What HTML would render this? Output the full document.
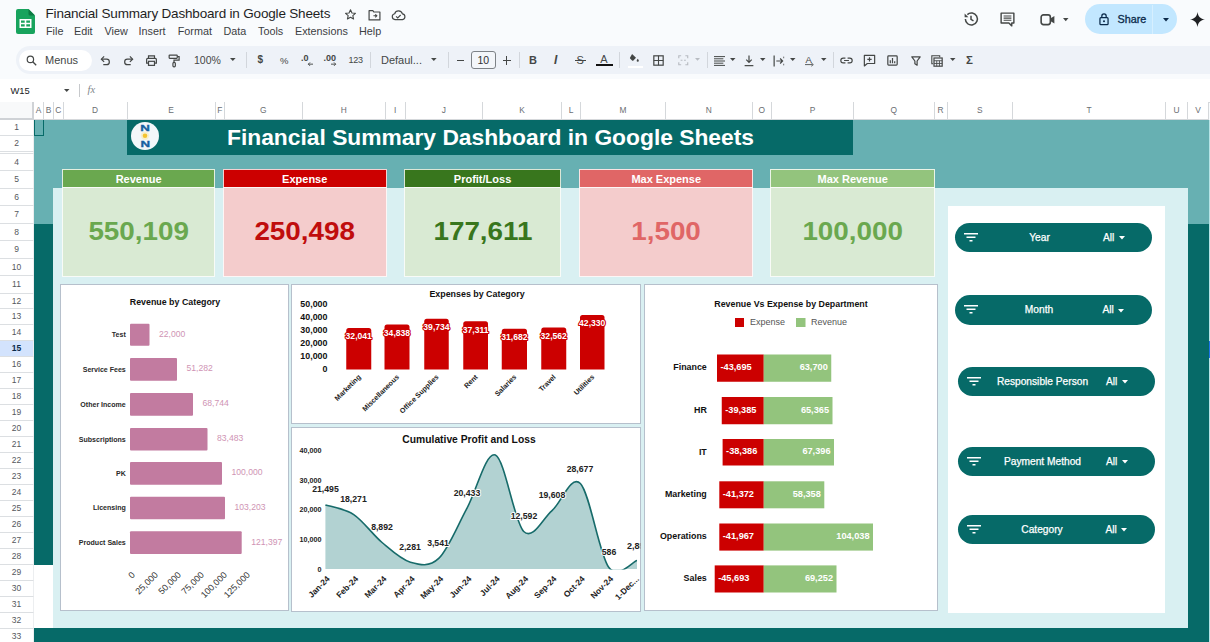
<!DOCTYPE html>
<html lang="en"><head><meta charset="utf-8"><title>Financial Summary Dashboard in Google Sheets</title>
<style>
*{box-sizing:border-box}
html,body{margin:0;padding:0}
body{width:1210px;height:642px;overflow:hidden;position:relative;background:#f9fbfd;font-family:"Liberation Sans",sans-serif;color:#1f1f1f}
.a{position:absolute}
.t{position:absolute;white-space:nowrap;line-height:1}
.menu{top:25.5px;font-size:10.8px;color:#3c4043;height:12px}
.tb{position:absolute;left:16px;top:46px;width:1194px;height:28px;background:#eef2f8;border-radius:14px 0 0 14px}
.sep{position:absolute;top:52px;width:1px;height:16px;background:#d2d6dc}
.ch{position:absolute;top:102px;height:18px;border-right:1px solid #d5d8db;border-bottom:1px solid #d5d8db;background:#fff;font-size:8.400px;color:#6b6e72;text-align:center;line-height:17px}
.rh{position:absolute;left:0;width:34px;border-right:1px solid #eceef0;border-bottom:1px solid #dcdfe2;background:#fff;font-size:8.5px;color:#55585c;text-align:center}
.card{position:absolute;top:169px;height:108.4px}
.card .h{position:absolute;left:0;right:0;top:0;height:19.5px;border:1.6px solid rgba(255,255,255,.82);color:#fff;font-weight:bold;font-size:11px;text-align:center;line-height:19px}
.card .b{position:absolute;left:0;right:0;top:18px;bottom:0;border:1.6px solid rgba(255,255,255,.82);font-weight:bold;font-size:26.4px;text-align:center;line-height:87px}
.card .b span{display:inline-block;transform:scaleX(1.055)}
.pn{position:absolute;background:#fff;border:1.5px solid #b6c0cc}
.pill{position:absolute;height:29.5px;width:197px;border-radius:15px;background:#066a68;color:#fff;font-size:10.2px}
.pill .l{position:absolute;left:34.5px;width:100px;text-align:center;top:0;line-height:29.5px;white-space:nowrap;-webkit-text-stroke:.25px #fff}
.pill .v{position:absolute;left:148px;top:0;line-height:29.5px;-webkit-text-stroke:.25px #fff}
.pill svg{position:absolute;left:9px;top:10px}
svg{position:absolute;overflow:visible}
svg text{font-family:"Liberation Sans",sans-serif}
</style></head><body>
<svg class="a" style="left:16px;top:9px" width="19" height="25" viewBox="0 0 19 25"><path d="M2 0h10.5L19 6.5V23a2 2 0 0 1-2 2H2a2 2 0 0 1-2-2V2a2 2 0 0 1 2-2z" fill="#18a35d"/><path d="M12.5 0L19 6.5h-5a1.5 1.5 0 0 1-1.5-1.5z" fill="#0c7a43"/><path d="M3.5 10h12v9h-12zM5 11.5v2.2h3.7v-2.2zM10.3 11.5v2.2H14v-2.2zM5 15.3v2.2h3.7v-2.2zM10.3 15.3v2.2H14v-2.2z" fill="#fff" fill-rule="evenodd"/></svg>
<div class="t" id="doctitle" style="left:45.5px;top:7.2px;font-size:13.5px;color:#1f1f1f;letter-spacing:-.18px">Financial Summary Dashboard in Google Sheets</div>
<svg class="a" style="left:344px;top:8px" width="13" height="13" viewBox="0 0 24 24"><path d="M12 3.2l2.7 5.9 6.4.7-4.8 4.3 1.4 6.3L12 17.1l-5.7 3.3 1.4-6.3L2.9 9.8l6.4-.7z" fill="none" stroke="#444746" stroke-width="2" stroke-linejoin="round"/></svg>
<svg class="a" style="left:367.5px;top:8.5px" width="13" height="12" viewBox="0 0 24 22"><path d="M2 3h7l2 2.5h11V20H2z" fill="none" stroke="#444746" stroke-width="2.2" stroke-linejoin="round"/><path d="M10 12.5h6m-2.5-2.8l2.8 2.8-2.8 2.8" fill="none" stroke="#444746" stroke-width="2"/></svg>
<svg class="a" style="left:390.5px;top:8.5px" width="15" height="12" viewBox="0 0 28 22"><path d="M7.5 19.5a5.5 5.5 0 0 1-.6-10.9A7.5 7.5 0 0 1 21.3 9a5.3 5.3 0 0 1 .2 10.5z" fill="none" stroke="#444746" stroke-width="2.2" stroke-linejoin="round"/><path d="M9.5 13.5l3 3 5.5-5.5" fill="none" stroke="#444746" stroke-width="2"/></svg>
<div class="t menu" style="left:46px">File</div>
<div class="t menu" style="left:74px">Edit</div>
<div class="t menu" style="left:104.5px">View</div>
<div class="t menu" style="left:138.5px">Insert</div>
<div class="t menu" style="left:177.7px">Format</div>
<div class="t menu" style="left:223.5px">Data</div>
<div class="t menu" style="left:258px">Tools</div>
<div class="t menu" style="left:295px">Extensions</div>
<div class="t menu" style="left:359px">Help</div>
<svg class="a" style="left:962px;top:10px" width="18" height="18" viewBox="0 0 24 24"><path d="M4.5 12a8 8 0 1 0 2.6-5.9" fill="none" stroke="#444746" stroke-width="2"/><path d="M3.5 4.5v5h5z" fill="#444746"/><path d="M12 7.5v5l3.3 2" fill="none" stroke="#444746" stroke-width="2"/></svg>
<svg class="a" style="left:999px;top:11px" width="17" height="17" viewBox="0 0 24 24"><path d="M3 3h18v14H18v4l-4-4H3z" fill="none" stroke="#444746" stroke-width="2" stroke-linejoin="round"/><path d="M6.5 7h11M6.500 10h11M6.500 13h11" stroke="#444746" stroke-width="1.6"/></svg>
<svg class="a" style="left:1039.500px;top:14px" width="15.500" height="11.500" viewBox="0 0 26 20"><rect x="1.500" y="1.500" width="16" height="17" rx="4" fill="none" stroke="#444746" stroke-width="2.800"/><path d="M17.500 8l7-4.500v13l-7-4.500z" fill="#444746"/></svg>
<svg class="a" style="left:1062.500px;top:17.500px" width="5.500" height="3.200" viewBox="0 0 7 4"><path d="M0 0h7L3.500 4z" fill="#444746"/></svg>
<div class="a" style="left:1085px;top:4.300px;width:91.500px;height:29.500px;border-radius:15px;background:#c2e7ff"></div>
<div class="a" style="left:1151.500px;top:4.500px;width:1px;height:29.500px;background:#d6efff"></div>
<svg class="a" style="left:1099.200px;top:12.800px" width="10" height="12.500" viewBox="0 0 16 20"><rect x="1.500" y="7.500" width="13" height="11" rx="1.500" fill="none" stroke="#0b2a4a" stroke-width="2"/><path d="M4.500 7.500V5a3.500 3.500 0 0 1 7 0v2.500" fill="none" stroke="#0b2a4a" stroke-width="2"/><circle cx="8" cy="13" r="1.600" fill="#0b2a4a"/></svg>
<div class="t" style="left:1117.500px;top:14px;font-size:10.800px;color:#0b2a4a;-webkit-text-stroke:.3px #0b2a4a">Share</div>
<svg class="a" style="left:1162.500px;top:18px" width="6" height="3.500" viewBox="0 0 7 4"><path d="M0 0h7L3.500 4z" fill="#0b2a4a"/></svg>
<svg class="a" style="left:1190.300px;top:12px" width="15" height="15" viewBox="0 0 24 24"><path d="M12 0c.8 7 5 11.200 12 12-7 .8-11.200 5-12 12-.8-7-5-11.200-12-12 7-.8 11.200-5 12-12z" fill="#202124"/></svg>
<div class="tb"></div>
<div class="a" style="left:0;top:74px;width:1210px;height:5px;background:#f9fbfd"></div>
<div class="a" style="left:18.500px;top:49.500px;width:73px;height:21px;border-radius:10.500px;background:#fff"></div>
<svg class="a" style="left:26px;top:54.500px" width="11" height="11" viewBox="0 0 20 20"><circle cx="8" cy="8" r="5.800" fill="none" stroke="#444746" stroke-width="2.200"/><path d="M12.300 12.300L18.500 18.500" stroke="#444746" stroke-width="2.400"/></svg>
<div class="t" style="left:45px;top:54.500px;font-size:11px;color:#444746">Menus</div>
<svg class="a" style="left:100px;top:55px" width="11" height="11" viewBox="0 0 20 20"><path d="M3 7.500h9a5 5 0 0 1 0 10H6" fill="none" stroke="#444746" stroke-width="2.200"/><path d="M7.500 2.500L2.500 7.500l5 5" fill="none" stroke="#444746" stroke-width="2.200"/></svg>
<svg class="a" style="left:123px;top:55px" width="11" height="11" viewBox="0 0 20 20"><path d="M17 7.500H8a5 5 0 0 0 0 10h6" fill="none" stroke="#444746" stroke-width="2.200"/><path d="M12.500 2.500l5 5-5 5" fill="none" stroke="#444746" stroke-width="2.200"/></svg>
<svg class="a" style="left:145px;top:54px" width="13" height="13" viewBox="0 0 24 24"><path d="M6.500 8V3.500h11V8M6.500 17H3V10a2 2 0 0 1 2-2h14a2 2 0 0 1 2 2v7h-3.500" fill="none" stroke="#444746" stroke-width="2.200"/><rect x="6.500" y="13.500" width="11" height="7.500" fill="none" stroke="#444746" stroke-width="2.200"/></svg>
<svg class="a" style="left:168px;top:53.500px" width="12" height="14" viewBox="0 0 22 26"><rect x="2" y="2" width="15" height="6" rx="1" fill="none" stroke="#444746" stroke-width="2.200"/><path d="M17 5h3.500v6.500H11V15" fill="none" stroke="#444746" stroke-width="2.200"/><rect x="9" y="15.500" width="4.500" height="8.500" rx="2" fill="none" stroke="#444746" stroke-width="2.200"/></svg>
<div class="t" style="left:194px;top:54.500px;font-size:10.500px;color:#444746">100%</div>
<svg class="a" style="left:229.7px;top:58.3px" width="5.6" height="3.08" viewBox="0 0 8 4.400"><path d="M0 0h8L4 4.400z" fill="#444746"/></svg>
<div class="sep" style="left:246px"></div>
<div class="sep" style="left:370px"></div>
<div class="sep" style="left:447.5px"></div>
<div class="sep" style="left:519px"></div>
<div class="sep" style="left:619px"></div>
<div class="sep" style="left:706.5px"></div>
<div class="sep" style="left:832.5px"></div>
<div class="t" style="left:257.500px;top:55px;font-size:10px;color:#444746;font-weight:bold">$</div>
<div class="t" style="left:280px;top:55.500px;font-size:9.500px;color:#444746">%</div>
<div class="t" style="left:301px;top:54px;font-size:9px;color:#444746;font-weight:bold">.0</div>
<svg class="a" style="left:306.500px;top:61.800px" width="6" height="4.300" viewBox="0 0 7 5"><path d="M7 2.500H1.500M3.500 .5l-2 2 2 2" fill="none" stroke="#444746" stroke-width="1.100"/></svg>
<div class="t" style="left:323.500px;top:54px;font-size:9px;color:#444746;font-weight:bold">.00</div>
<svg class="a" style="left:330.500px;top:61.800px" width="6" height="4.300" viewBox="0 0 7 5"><path d="M0 2.500h5.500M3.500 .5l2 2-2 2" fill="none" stroke="#444746" stroke-width="1.100"/></svg>
<div class="t" style="left:348.500px;top:55.500px;font-size:9px;color:#444746;letter-spacing:-.3px">123</div>
<div class="t" style="left:381px;top:54.500px;font-size:11px;color:#444746">Defaul...</div>
<svg class="a" style="left:430.7px;top:58.3px" width="5.6" height="3.08" viewBox="0 0 8 4.400"><path d="M0 0h8L4 4.400z" fill="#444746"/></svg>
<div class="a" style="left:456.500px;top:59.500px;width:7.500px;height:1.300px;background:#444746"></div>
<div class="a" style="left:471px;top:50.800px;width:24.600px;height:18px;border:1px solid #7d8287;border-radius:3px;background:#f3f6fa;font-size:10.500px;color:#303134;text-align:center;line-height:16px">10</div>
<div class="a" style="left:502.500px;top:59.500px;width:8.500px;height:1.300px;background:#444746"></div>
<div class="a" style="left:506.100px;top:56px;width:1.300px;height:8.500px;background:#444746"></div>
<div class="t" style="left:529px;top:54.500px;font-size:11px;color:#444746;font-weight:bold">B</div>
<div class="t" style="left:554px;top:54px;font-size:12px;color:#444746;font-weight:bold;font-style:italic">I</div>
<div class="t" style="left:576.500px;top:54.500px;font-size:11px;color:#444746">S</div>
<div class="a" style="left:574.500px;top:60px;width:11px;height:1.100px;background:#444746"></div>
<div class="t" style="left:600.300px;top:53.500px;font-size:11px;color:#444746">A</div>
<div class="a" style="left:596px;top:64.300px;width:16.500px;height:2px;background:#111"></div>
<svg class="a" style="left:628.500px;top:52.500px" width="10.500" height="11.400" viewBox="0 0 24 26"><path d="M7 2l9 9-6.500 6.500a1.500 1.500 0 0 1-2 0L2.500 12.500a1.500 1.500 0 0 1 0-2z" fill="#444746"/><path d="M20 13s2.500 3 2.500 4.500a2.500 2.500 0 0 1-5 0C17.500 16 20 13 20 13z" fill="#444746"/></svg>
<div class="a" style="left:628px;top:65.500px;width:15px;height:2.500px;background:#fff"></div>
<svg class="a" style="left:653.300px;top:55.300px" width="11" height="11" viewBox="0 0 20 20"><rect x="1.500" y="1.500" width="17" height="17" fill="none" stroke="#444746" stroke-width="2.200"/><path d="M10 1.500v17M1.500 10h17" stroke="#444746" stroke-width="2"/></svg>
<svg class="a" style="left:678.300px;top:55.300px" width="10.500" height="10.500" viewBox="0 0 20 20"><path d="M1.500 6V1.500H6M14 1.500h4.500V6M18.500 14v4.500H14M6 18.500H1.500V14" fill="none" stroke="#b8bcc2" stroke-width="2.200"/><path d="M5 10h3.500M15 10h-3.500" stroke="#b8bcc2" stroke-width="2"/></svg>
<svg class="a" style="left:695.0px;top:58.3px" width="5" height="2.75" viewBox="0 0 8 4.400"><path d="M0 0h8L4 4.400z" fill="#b8bcc2"/></svg>
<svg class="a" style="left:713.500px;top:55.500px" width="11" height="10" viewBox="0 0 20 18"><path d="M0 1h20M0 5h17M0 9h20M0 13h17M0 17h20" stroke="#444746" stroke-width="1.800"/></svg>
<svg class="a" style="left:729.75px;top:58.3px" width="5.5" height="3.03" viewBox="0 0 8 4.400"><path d="M0 0h8L4 4.400z" fill="#444746"/></svg>
<svg class="a" style="left:744px;top:54.500px" width="10" height="12" viewBox="0 0 18 22"><path d="M9 1v12M4 8.500l5 5 5-5" fill="none" stroke="#444746" stroke-width="2.200"/><path d="M1 19.500h16" stroke="#444746" stroke-width="2.200"/></svg>
<svg class="a" style="left:759.75px;top:58.3px" width="5.5" height="3.03" viewBox="0 0 8 4.400"><path d="M0 0h8L4 4.400z" fill="#444746"/></svg>
<svg class="a" style="left:773px;top:54.500px" width="11" height="12" viewBox="0 0 20 22"><path d="M2 1v20" stroke="#444746" stroke-width="2.200"/><path d="M6 11h11M13 6.500l4.500 4.500-4.500 4.500" fill="none" stroke="#444746" stroke-width="2.200"/><path d="M19.500 3v3M19.500 16v3" stroke="#444746" stroke-width="1.400"/></svg>
<svg class="a" style="left:789.75px;top:58.3px" width="5.5" height="3.03" viewBox="0 0 8 4.400"><path d="M0 0h8L4 4.400z" fill="#444746"/></svg>
<div class="t" style="left:805.500px;top:54.500px;font-size:9.500px;color:#444746">A</div>
<svg class="a" style="left:805px;top:62.800px" width="9.500" height="3.200" viewBox="0 0 12 4"><path d="M0 2h9.500M8 0l2.500 2L8 4" fill="none" stroke="#444746" stroke-width="1.100"/></svg>
<svg class="a" style="left:820.75px;top:58.3px" width="5.5" height="3.03" viewBox="0 0 8 4.400"><path d="M0 0h8L4 4.400z" fill="#444746"/></svg>
<svg class="a" style="left:839.500px;top:56.500px" width="13" height="7" viewBox="0 0 24 12"><path d="M10 1.500H6a4.500 4.500 0 0 0 0 9h4M14 1.500h4a4.500 4.500 0 0 1 0 9h-4M7.500 6h9" fill="none" stroke="#444746" stroke-width="2.200"/></svg>
<svg class="a" style="left:862.500px;top:54px" width="13" height="13" viewBox="0 0 24 24"><path d="M2.500 2.500h19v15H8l-5.500 4.500z" fill="none" stroke="#444746" stroke-width="2.200" stroke-linejoin="round"/><path d="M12 6v8M8 10h8" stroke="#444746" stroke-width="2.200"/></svg>
<svg class="a" style="left:887px;top:55px" width="11" height="11" viewBox="0 0 20 20"><rect x="1.500" y="1.500" width="17" height="17" rx="1.500" fill="none" stroke="#444746" stroke-width="2.200"/><path d="M6 15V9.500M10 15V5.500M14 15v-3.500" stroke="#444746" stroke-width="2.200"/></svg>
<svg class="a" style="left:911px;top:55.500px" width="10" height="10" viewBox="0 0 18 18"><path d="M1.500 1.500h15L11 9v7.500L7 14V9z" fill="none" stroke="#444746" stroke-width="2.200" stroke-linejoin="round"/></svg>
<svg class="a" style="left:931px;top:54.500px" width="12" height="12" viewBox="0 0 22 22"><path d="M4 16H1.500V1.500H16V4" fill="none" stroke="#444746" stroke-width="2"/><rect x="5.500" y="5.500" width="15" height="15" fill="none" stroke="#444746" stroke-width="2.200"/><path d="M5.500 10.500h15M5.500 15.500h15M10.500 10.500v10M15.500 10.500v10" stroke="#444746" stroke-width="1.600"/></svg>
<svg class="a" style="left:949.75px;top:58.3px" width="5.5" height="3.03" viewBox="0 0 8 4.400"><path d="M0 0h8L4 4.400z" fill="#444746"/></svg>
<div class="t" style="left:966px;top:54.500px;font-size:11.500px;color:#444746;font-weight:bold">Σ</div>
<div class="a" style="left:0;top:79px;width:1210px;height:23px;background:#fff"></div>
<div class="t" style="left:10.500px;top:86px;font-size:9.400px;color:#202124">W15</div>
<svg class="a" style="left:63.75px;top:89px" width="5.5" height="3.03" viewBox="0 0 8 4.400"><path d="M0 0h8L4 4.400z" fill="#444746"/></svg>
<div class="a" style="left:78.500px;top:84px;width:1px;height:13px;background:#c7c9cc"></div>
<div class="t" style="left:87.500px;top:84.500px;font-size:10.500px;color:#80868b;font-style:italic;font-family:'Liberation Serif',serif">fx</div>
<div class="a" style="left:0;top:101.500px;width:1210px;height:1px;background:#d5d8dc"></div>
<div class="a" style="left:0;top:102px;width:34px;height:18px;background:#f8f9fa;border-right:2px solid #cfd2d6;border-bottom:2px solid #cfd2d6"></div>
<div class="ch" style="left:34px;width:10px">A</div>
<div class="ch" style="left:44px;width:10px">B</div>
<div class="ch" style="left:54px;width:9.5px">C</div>
<div class="ch" style="left:63.5px;width:64.0px">D</div>
<div class="ch" style="left:127.5px;width:88.0px">E</div>
<div class="ch" style="left:215.5px;width:9.5px">F</div>
<div class="ch" style="left:225px;width:77.5px">G</div>
<div class="ch" style="left:302.5px;width:83.5px">H</div>
<div class="ch" style="left:386px;width:19.5px">I</div>
<div class="ch" style="left:405.5px;width:77.5px">J</div>
<div class="ch" style="left:483px;width:79px">K</div>
<div class="ch" style="left:562px;width:19px">L</div>
<div class="ch" style="left:581px;width:85px">M</div>
<div class="ch" style="left:666px;width:86.5px">N</div>
<div class="ch" style="left:752.5px;width:19.5px">O</div>
<div class="ch" style="left:772px;width:82px">P</div>
<div class="ch" style="left:854px;width:80.5px">Q</div>
<div class="ch" style="left:934.5px;width:13.0px">R</div>
<div class="ch" style="left:947.5px;width:65.5px">S</div>
<div class="ch" style="left:1013px;width:153px">T</div>
<div class="ch" style="left:1166px;width:22px">U</div>
<div class="ch" style="left:1188px;width:21px">V</div>
<div class="a" style="left:1209px;top:120px;width:1px;height:522px;background:#b5e4e6"></div>
<div class="rh" style="top:120px;height:16px;line-height:15.5px">1</div>
<div class="rh" style="top:136px;height:16px;line-height:15.5px">2</div>
<div class="rh" style="top:152px;height:2px"></div>
<div class="rh" style="top:154px;height:17px;line-height:16.5px">4</div>
<div class="rh" style="top:171px;height:17.5px;line-height:17.0px">5</div>
<div class="rh" style="top:188.5px;height:17.5px;line-height:17.0px">6</div>
<div class="rh" style="top:206px;height:17.5px;line-height:17.0px">7</div>
<div class="rh" style="top:223.5px;height:17.5px;line-height:17.0px">8</div>
<div class="rh" style="top:241px;height:17.5px;line-height:17.0px">9</div>
<div class="rh" style="top:258.5px;height:17.5px;line-height:17.0px">10</div>
<div class="rh" style="top:276px;height:17.5px;line-height:17.0px">11</div>
<div class="rh" style="top:293.5px;height:15.5px;line-height:15.0px">12</div>
<div class="rh" style="top:309.0px;height:16.0px;line-height:15.5px">13</div>
<div class="rh" style="top:325.0px;height:16.0px;line-height:15.5px">14</div>
<div class="rh" style="top:341.0px;height:16.0px;line-height:15.5px;background:#d3e3fd;color:#0b2a4a;font-weight:bold">15</div>
<div class="rh" style="top:357.0px;height:16.0px;line-height:15.5px">16</div>
<div class="rh" style="top:373.0px;height:16.0px;line-height:15.5px">17</div>
<div class="rh" style="top:389.0px;height:16.0px;line-height:15.5px">18</div>
<div class="rh" style="top:405.0px;height:16.0px;line-height:15.5px">19</div>
<div class="rh" style="top:421.0px;height:16.0px;line-height:15.5px">20</div>
<div class="rh" style="top:437.0px;height:16.0px;line-height:15.5px">21</div>
<div class="rh" style="top:453.0px;height:16.0px;line-height:15.5px">22</div>
<div class="rh" style="top:469.0px;height:16.0px;line-height:15.5px">23</div>
<div class="rh" style="top:485.0px;height:16.0px;line-height:15.5px">24</div>
<div class="rh" style="top:501.0px;height:16.0px;line-height:15.5px">25</div>
<div class="rh" style="top:517.0px;height:16.0px;line-height:15.5px">26</div>
<div class="rh" style="top:533.0px;height:16.0px;line-height:15.5px">27</div>
<div class="rh" style="top:549.0px;height:16.0px;line-height:15.5px">28</div>
<div class="rh" style="top:565.0px;height:16.0px;line-height:15.5px">29</div>
<div class="rh" style="top:581.0px;height:16.0px;line-height:15.5px">30</div>
<div class="rh" style="top:597.0px;height:16.0px;line-height:15.5px">31</div>
<div class="rh" style="top:613.0px;height:16.0px;line-height:15.5px">32</div>
<div class="rh" style="top:629.0px;height:16.0px;line-height:15.5px">33</div>
<div class="a" style="left:34px;top:120px;width:1175px;height:103.500px;background:#67b0b2"></div>
<div class="a" style="left:34px;top:223.500px;width:1175px;height:418.500px;background:#066a68"></div>
<div class="a" style="left:34px;top:564.500px;width:20px;height:63.500px;background:#fff"></div>
<div class="a" style="left:34px;top:120px;width:10px;height:16px;border-right:1px solid #066a68;border-bottom:1px solid #066a68;border-left:1.500px solid #066a68"></div>
<div class="a" style="left:53px;top:188px;width:1135px;height:440px;background:#d9f0f2"></div>
<div class="a" style="left:1208.600px;top:340.500px;width:1.400px;height:17px;background:#1a73e8"></div>
<div class="a" style="left:127px;top:120px;width:725.500px;height:34.500px;background:#066a68"></div>
<div class="t" id="banner" style="left:227px;top:125.500px;font-size:22.800px;font-weight:bold;color:#fff">Financial Summary Dashboard in Google Sheets</div>
<svg class="a" style="left:131px;top:122px" width="28" height="28" viewBox="0 0 28 28"><circle cx="14" cy="14" r="14" fill="#f3f7f9"/><circle cx="14" cy="13.800" r="4.200" fill="#fbe9a8" opacity=".55"/><circle cx="14" cy="13.800" r="2.300" fill="#f4c430"/><text transform="translate(14.100,8.900) scale(1.55,1)" font-size="8.600" font-weight="bold" fill="#17609f" stroke="#17609f" stroke-width=".3" text-anchor="middle">N</text><text transform="translate(14.200,25.300) scale(1.55,1)" font-size="8.600" font-weight="bold" fill="#17609f" stroke="#17609f" stroke-width=".3" text-anchor="middle">N</text></svg>
<div class="card" style="left:62px;width:153.2px"><div class="h" style="background:#6aa84f">Revenue</div><div class="b" style="background:#d9ead3;color:#6aa84f"><span>550,109</span></div></div>
<div class="card" style="left:222.8px;width:163.89999999999998px"><div class="h" style="background:#cc0000">Expense</div><div class="b" style="background:#f4cccc;color:#c00d0d"><span>250,498</span></div></div>
<div class="card" style="left:403.8px;width:157.49999999999994px"><div class="h" style="background:#38761d">Profit/Loss</div><div class="b" style="background:#d9ead3;color:#38761d"><span>177,611</span></div></div>
<div class="card" style="left:579.2px;width:174.0999999999999px"><div class="h" style="background:#e06666">Max Expense</div><div class="b" style="background:#f4cccc;color:#e06666"><span>1,500</span></div></div>
<div class="card" style="left:769.8px;width:165.70000000000005px"><div class="h" style="background:#93c47d">Max Revenue</div><div class="b" style="background:#d9ead3;color:#6aa84f"><span>100,000</span></div></div>
<div class="pn" style="left:60.400px;top:284.200px;width:228.200px;height:327.300px"></div>
<div class="pn" style="left:291.200px;top:284.200px;width:349.400px;height:140.300px"></div>
<div class="pn" style="left:291.400px;top:427.200px;width:349.800px;height:184.500px"></div>
<div class="pn" style="left:644px;top:284.200px;width:294px;height:327px"></div>
<div class="a" style="left:947.500px;top:205.500px;width:217px;height:407px;background:#fff"></div>
<div class="pill" style="left:955px;top:222.5px"><svg width="14" height="9" viewBox="0 0 14 9"><path d="M0 .8h14M2.500 4.300h9M5.500 7.800h3" stroke="#fff" stroke-width="1.500" fill="none"/></svg><div class="l">Year</div><div class="v">All</div><svg style="left:163.500px;top:13.500px" width="6" height="3.500" viewBox="0 0 8 4.400"><path d="M0 0h8L4 4.400z" fill="#fff"/></svg></div>
<div class="pill" style="left:954.5px;top:295px"><svg width="14" height="9" viewBox="0 0 14 9"><path d="M0 .8h14M2.500 4.300h9M5.500 7.800h3" stroke="#fff" stroke-width="1.500" fill="none"/></svg><div class="l">Month</div><div class="v">All</div><svg style="left:163.500px;top:13.500px" width="6" height="3.500" viewBox="0 0 8 4.400"><path d="M0 0h8L4 4.400z" fill="#fff"/></svg></div>
<div class="pill" style="left:958px;top:366.5px"><svg width="14" height="9" viewBox="0 0 14 9"><path d="M0 .8h14M2.500 4.300h9M5.500 7.800h3" stroke="#fff" stroke-width="1.500" fill="none"/></svg><div class="l">Responsible Person</div><div class="v">All</div><svg style="left:163.500px;top:13.500px" width="6" height="3.500" viewBox="0 0 8 4.400"><path d="M0 0h8L4 4.400z" fill="#fff"/></svg></div>
<div class="pill" style="left:958px;top:446.5px"><svg width="14" height="9" viewBox="0 0 14 9"><path d="M0 .8h14M2.500 4.300h9M5.500 7.800h3" stroke="#fff" stroke-width="1.500" fill="none"/></svg><div class="l">Payment Method</div><div class="v">All</div><svg style="left:163.500px;top:13.500px" width="6" height="3.500" viewBox="0 0 8 4.400"><path d="M0 0h8L4 4.400z" fill="#fff"/></svg></div>
<div class="pill" style="left:957.5px;top:514.5px"><svg width="14" height="9" viewBox="0 0 14 9"><path d="M0 .8h14M2.500 4.300h9M5.500 7.800h3" stroke="#fff" stroke-width="1.500" fill="none"/></svg><div class="l">Category</div><div class="v">All</div><svg style="left:163.500px;top:13.500px" width="6" height="3.500" viewBox="0 0 8 4.400"><path d="M0 0h8L4 4.400z" fill="#fff"/></svg></div>
<svg class="a" style="left:0;top:0" width="1210" height="642" viewBox="0 0 1210 642">
<text x="175" y="304.800" font-size="8.850" font-weight="bold" fill="#111" text-anchor="middle">Revenue by Category</text>
<rect x="130" y="323.75" width="19.50" height="22.00" rx="1" fill="#c27ba0"/>
<text x="125.800" y="337.05" font-size="7.050" font-weight="bold" fill="#2a2a2a" text-anchor="end">Test</text>
<text x="159.00" y="336.75" font-size="8.600" fill="#cf94b4">22,000</text>
<rect x="130" y="358" width="47.00" height="22.75" rx="1" fill="#c27ba0"/>
<text x="125.800" y="371.68" font-size="7.050" font-weight="bold" fill="#2a2a2a" text-anchor="end">Service Fees</text>
<text x="186.50" y="371.38" font-size="8.600" fill="#cf94b4">51,282</text>
<rect x="130" y="393" width="63.00" height="22.75" rx="1" fill="#c27ba0"/>
<text x="125.800" y="406.68" font-size="7.050" font-weight="bold" fill="#2a2a2a" text-anchor="end">Other Income</text>
<text x="202.50" y="406.38" font-size="8.600" fill="#cf94b4">68,744</text>
<rect x="130" y="428" width="77.50" height="22.50" rx="1" fill="#c27ba0"/>
<text x="125.800" y="441.55" font-size="7.050" font-weight="bold" fill="#2a2a2a" text-anchor="end">Subscriptions</text>
<text x="217.00" y="441.25" font-size="8.600" fill="#cf94b4">83,483</text>
<rect x="130" y="462" width="92.00" height="22.70" rx="1" fill="#c27ba0"/>
<text x="125.800" y="475.65" font-size="7.050" font-weight="bold" fill="#2a2a2a" text-anchor="end">PK</text>
<text x="231.50" y="475.35" font-size="8.600" fill="#cf94b4">100,000</text>
<rect x="130" y="496.7" width="95.00" height="22.60" rx="1" fill="#c27ba0"/>
<text x="125.800" y="510.30" font-size="7.050" font-weight="bold" fill="#2a2a2a" text-anchor="end">Licensing</text>
<text x="234.50" y="510.00" font-size="8.600" fill="#cf94b4">103,203</text>
<rect x="130" y="531.3" width="111.70" height="22.70" rx="1" fill="#c27ba0"/>
<text x="125.800" y="544.95" font-size="7.050" font-weight="bold" fill="#2a2a2a" text-anchor="end">Product Sales</text>
<text x="251.20" y="544.65" font-size="8.600" fill="#cf94b4">121,397</text>
<text transform="translate(135.50,575.5) rotate(-45)" font-size="9" fill="#333" text-anchor="end">0</text>
<text transform="translate(158.50,575.5) rotate(-45)" font-size="9" fill="#333" text-anchor="end">25,000</text>
<text transform="translate(181.50,575.5) rotate(-45)" font-size="9" fill="#333" text-anchor="end">50,000</text>
<text transform="translate(204.50,575.5) rotate(-45)" font-size="9" fill="#333" text-anchor="end">75,000</text>
<text transform="translate(227.50,575.5) rotate(-45)" font-size="9" fill="#333" text-anchor="end">100,000</text>
<text transform="translate(250.50,575.5) rotate(-45)" font-size="9" fill="#333" text-anchor="end">125,000</text>
<text x="477" y="297.300" font-size="8.900" font-weight="bold" fill="#111" text-anchor="middle">Expenses by Category</text>
<text x="327.500" y="306.95" font-size="8.900" font-weight="bold" fill="#111" text-anchor="end">50,000</text>
<text x="327.500" y="319.97" font-size="8.900" font-weight="bold" fill="#111" text-anchor="end">40,000</text>
<text x="327.500" y="332.99" font-size="8.900" font-weight="bold" fill="#111" text-anchor="end">30,000</text>
<text x="327.500" y="346.01" font-size="8.900" font-weight="bold" fill="#111" text-anchor="end">20,000</text>
<text x="327.500" y="359.03" font-size="8.900" font-weight="bold" fill="#111" text-anchor="end">10,000</text>
<text x="327.500" y="372.05" font-size="8.900" font-weight="bold" fill="#111" text-anchor="end">0</text>
<path d="M346.25 369.500V330.5a2.5 2.5 0 0 1 2.5-2.5H368.75a2.5 2.5 0 0 1 2.5 2.5V369.500z" fill="#cc0000"/>
<text x="358.75" y="339.30" font-size="8.600" font-weight="bold" fill="#fff" stroke="#cc0000" stroke-width="2.200" stroke-linejoin="round" paint-order="stroke" text-anchor="middle">32,041</text>
<text transform="translate(361.25,377.5) rotate(-45)" font-size="7.100" font-weight="bold" fill="#222" text-anchor="end">Marketing</text>
<path d="M384.5 369.500V327.0a2.5 2.5 0 0 1 2.5-2.5H407.0a2.5 2.5 0 0 1 2.5 2.5V369.500z" fill="#cc0000"/>
<text x="397.00" y="335.80" font-size="8.600" font-weight="bold" fill="#fff" stroke="#cc0000" stroke-width="2.200" stroke-linejoin="round" paint-order="stroke" text-anchor="middle">34,838</text>
<text transform="translate(399.50,377.5) rotate(-45)" font-size="7.100" font-weight="bold" fill="#222" text-anchor="end">Miscellaneous</text>
<path d="M424.25 369.500V321.25a2.5 2.5 0 0 1 2.5-2.5H446.25a2.5 2.5 0 0 1 2.5 2.5V369.500z" fill="#cc0000"/>
<text x="436.50" y="330.05" font-size="8.600" font-weight="bold" fill="#fff" stroke="#cc0000" stroke-width="2.200" stroke-linejoin="round" paint-order="stroke" text-anchor="middle">39,734</text>
<text transform="translate(439.00,377.5) rotate(-45)" font-size="7.100" font-weight="bold" fill="#222" text-anchor="end">Office Supplies</text>
<path d="M463.25 369.500V323.75a2.5 2.5 0 0 1 2.5-2.5H485.5a2.5 2.5 0 0 1 2.5 2.5V369.500z" fill="#cc0000"/>
<text x="475.62" y="332.55" font-size="8.600" font-weight="bold" fill="#fff" stroke="#cc0000" stroke-width="2.200" stroke-linejoin="round" paint-order="stroke" text-anchor="middle">37,311</text>
<text transform="translate(478.12,377.5) rotate(-45)" font-size="7.100" font-weight="bold" fill="#222" text-anchor="end">Rent</text>
<path d="M501.75 369.500V331.25a2.5 2.5 0 0 1 2.5-2.5H524.5a2.5 2.5 0 0 1 2.5 2.5V369.500z" fill="#cc0000"/>
<text x="514.38" y="340.05" font-size="8.600" font-weight="bold" fill="#fff" stroke="#cc0000" stroke-width="2.200" stroke-linejoin="round" paint-order="stroke" text-anchor="middle">31,682</text>
<text transform="translate(516.88,377.5) rotate(-45)" font-size="7.100" font-weight="bold" fill="#222" text-anchor="end">Salaries</text>
<path d="M541.25 369.500V330.0a2.5 2.5 0 0 1 2.5-2.5H563.75a2.5 2.5 0 0 1 2.5 2.5V369.500z" fill="#cc0000"/>
<text x="553.75" y="338.80" font-size="8.600" font-weight="bold" fill="#fff" stroke="#cc0000" stroke-width="2.200" stroke-linejoin="round" paint-order="stroke" text-anchor="middle">32,562</text>
<text transform="translate(556.25,377.5) rotate(-45)" font-size="7.100" font-weight="bold" fill="#222" text-anchor="end">Travel</text>
<path d="M580 369.500V317.5a2.5 2.5 0 0 1 2.5-2.5H602.0a2.5 2.5 0 0 1 2.5 2.5V369.500z" fill="#cc0000"/>
<text x="592.25" y="326.30" font-size="8.600" font-weight="bold" fill="#fff" stroke="#cc0000" stroke-width="2.200" stroke-linejoin="round" paint-order="stroke" text-anchor="middle">42,330</text>
<text transform="translate(594.75,377.5) rotate(-45)" font-size="7.100" font-weight="bold" fill="#222" text-anchor="end">Utilities</text>
<text x="791" y="306.500" font-size="8.850" font-weight="bold" fill="#111" text-anchor="middle">Revenue Vs Expense by Department</text>
<rect x="735" y="318" width="9" height="9" fill="#cc0000"/><text x="750" y="324.900" font-size="9" fill="#555">Expense</text>
<rect x="796" y="318" width="9.500" height="9" fill="#93c47d"/><text x="811" y="324.900" font-size="9" fill="#555">Revenue</text>
<rect x="717" y="354.5" width="46.75" height="27.25" fill="#cc0000"/>
<rect x="763.750" y="354.5" width="67.50" height="27.25" fill="#93c47d"/>
<text x="706.800" y="370.43" font-size="8.900" font-weight="bold" fill="#111" text-anchor="end">Finance</text>
<text x="720.50" y="370.12" font-size="9.200" font-weight="bold" fill="#fff">-43,695</text>
<text x="827.75" y="370.12" font-size="9.200" font-weight="bold" fill="#fff" text-anchor="end">63,700</text>
<rect x="721.75" y="397" width="42.00" height="27.25" fill="#cc0000"/>
<rect x="763.750" y="397" width="68.75" height="27.25" fill="#93c47d"/>
<text x="706.800" y="412.93" font-size="8.900" font-weight="bold" fill="#111" text-anchor="end">HR</text>
<text x="725.25" y="412.62" font-size="9.200" font-weight="bold" fill="#fff">-39,385</text>
<text x="829.00" y="412.62" font-size="9.200" font-weight="bold" fill="#fff" text-anchor="end">65,365</text>
<rect x="722.6" y="439" width="41.15" height="26.50" fill="#cc0000"/>
<rect x="763.750" y="439" width="70.25" height="26.50" fill="#93c47d"/>
<text x="706.800" y="454.55" font-size="8.900" font-weight="bold" fill="#111" text-anchor="end">IT</text>
<text x="726.10" y="454.25" font-size="9.200" font-weight="bold" fill="#fff">-38,386</text>
<text x="830.50" y="454.25" font-size="9.200" font-weight="bold" fill="#fff" text-anchor="end">67,396</text>
<rect x="719.3" y="481.3" width="44.45" height="27.00" fill="#cc0000"/>
<rect x="763.750" y="481.3" width="60.55" height="27.00" fill="#93c47d"/>
<text x="706.800" y="497.10" font-size="8.900" font-weight="bold" fill="#111" text-anchor="end">Marketing</text>
<text x="722.80" y="496.80" font-size="9.200" font-weight="bold" fill="#fff">-41,372</text>
<text x="820.80" y="496.80" font-size="9.200" font-weight="bold" fill="#fff" text-anchor="end">58,358</text>
<rect x="719.3" y="523.5" width="44.45" height="27.10" fill="#cc0000"/>
<rect x="763.750" y="523.5" width="109.25" height="27.10" fill="#93c47d"/>
<text x="706.800" y="539.35" font-size="8.900" font-weight="bold" fill="#111" text-anchor="end">Operations</text>
<text x="722.80" y="539.05" font-size="9.200" font-weight="bold" fill="#fff">-41,967</text>
<text x="869.50" y="539.05" font-size="9.200" font-weight="bold" fill="#fff" text-anchor="end">104,038</text>
<rect x="714.7" y="565.4" width="49.05" height="27.10" fill="#cc0000"/>
<rect x="763.750" y="565.4" width="72.75" height="27.10" fill="#93c47d"/>
<text x="706.800" y="581.25" font-size="8.900" font-weight="bold" fill="#111" text-anchor="end">Sales</text>
<text x="718.20" y="580.95" font-size="9.200" font-weight="bold" fill="#fff">-45,693</text>
<text x="833.00" y="580.95" font-size="9.200" font-weight="bold" fill="#fff" text-anchor="end">69,252</text>
<text x="469" y="443" font-size="10.300" font-weight="bold" fill="#111" text-anchor="middle">Cumulative Profit and Loss</text>
<text x="321.500" y="452.80" font-size="7.200" font-weight="bold" fill="#222" text-anchor="end">40,000</text>
<text x="321.500" y="482.60" font-size="7.200" font-weight="bold" fill="#222" text-anchor="end">30,000</text>
<text x="321.500" y="512.40" font-size="7.200" font-weight="bold" fill="#222" text-anchor="end">20,000</text>
<text x="321.500" y="542.20" font-size="7.200" font-weight="bold" fill="#222" text-anchor="end">10,000</text>
<text x="321.500" y="572.00" font-size="7.200" font-weight="bold" fill="#222" text-anchor="end">0</text>
<clipPath id="cp4"><rect x="324" y="445" width="313.300" height="124.600"/></clipPath>
<g clip-path="url(#cp4)"><path d="M325.40 504.94C330.12 506.55 344.29 508.29 353.73 514.55C363.17 520.81 372.62 534.56 382.06 542.50C391.50 550.44 400.95 559.54 410.39 562.20C419.83 564.86 429.28 567.46 438.72 558.45C448.16 549.43 457.61 525.35 467.05 508.11C476.49 490.87 485.94 451.11 495.38 455.00C504.82 458.89 514.27 522.21 523.71 531.48C533.15 540.74 542.60 518.56 552.04 510.57C561.48 502.58 570.93 474.09 580.37 483.54C589.81 492.99 599.26 554.43 608.70 567.25C618.14 580.08 632.31 561.62 637.03 560.50L637.03 569L325.40 569z" fill="#b2d2d2"/><path d="M325.40 504.94C330.12 506.55 344.29 508.29 353.73 514.55C363.17 520.81 372.62 534.56 382.06 542.50C391.50 550.44 400.95 559.54 410.39 562.20C419.83 564.86 429.28 567.46 438.72 558.45C448.16 549.43 457.61 525.35 467.05 508.11C476.49 490.87 485.94 451.11 495.38 455.00C504.82 458.89 514.27 522.21 523.71 531.48C533.15 540.74 542.60 518.56 552.04 510.57C561.48 502.58 570.93 474.09 580.37 483.54C589.81 492.99 599.26 554.43 608.70 567.25C618.14 580.08 632.31 561.62 637.03 560.50" fill="none" stroke="#176b6a" stroke-width="1.600"/></g>
<text x="325.5" y="492.20" font-size="8.700" font-weight="bold" fill="#222" stroke="#fff" stroke-width="1.800" stroke-linejoin="round" paint-order="stroke" text-anchor="middle">21,495</text>
<text x="353.5" y="502.00" font-size="8.700" font-weight="bold" fill="#222" stroke="#fff" stroke-width="1.800" stroke-linejoin="round" paint-order="stroke" text-anchor="middle">18,271</text>
<text x="382" y="530.10" font-size="8.700" font-weight="bold" fill="#222" stroke="#fff" stroke-width="1.800" stroke-linejoin="round" paint-order="stroke" text-anchor="middle">8,892</text>
<text x="410" y="550.00" font-size="8.700" font-weight="bold" fill="#222" stroke="#fff" stroke-width="1.800" stroke-linejoin="round" paint-order="stroke" text-anchor="middle">2,281</text>
<text x="438" y="546.20" font-size="8.700" font-weight="bold" fill="#222" stroke="#fff" stroke-width="1.800" stroke-linejoin="round" paint-order="stroke" text-anchor="middle">3,541</text>
<text x="467" y="495.80" font-size="8.700" font-weight="bold" fill="#222" stroke="#fff" stroke-width="1.800" stroke-linejoin="round" paint-order="stroke" text-anchor="middle">20,433</text>
<text x="524" y="519.20" font-size="8.700" font-weight="bold" fill="#222" stroke="#fff" stroke-width="1.800" stroke-linejoin="round" paint-order="stroke" text-anchor="middle">12,592</text>
<text x="552" y="498.00" font-size="8.700" font-weight="bold" fill="#222" stroke="#fff" stroke-width="1.800" stroke-linejoin="round" paint-order="stroke" text-anchor="middle">19,608</text>
<text x="580" y="471.50" font-size="8.700" font-weight="bold" fill="#222" stroke="#fff" stroke-width="1.800" stroke-linejoin="round" paint-order="stroke" text-anchor="middle">28,677</text>
<text x="609" y="554.70" font-size="8.700" font-weight="bold" fill="#222" stroke="#fff" stroke-width="1.800" stroke-linejoin="round" paint-order="stroke" text-anchor="middle">586</text>
<clipPath id="cp4b"><rect x="600" y="535" width="40.300" height="20"/></clipPath>
<text x="627" y="548.800" font-size="9" font-weight="bold" fill="#222" clip-path="url(#cp4b)">2,853</text>
<text transform="translate(330.40,579.5) rotate(-45)" font-size="8.400" font-weight="bold" fill="#222" text-anchor="end">Jan-24</text>
<text transform="translate(358.73,579.5) rotate(-45)" font-size="8.400" font-weight="bold" fill="#222" text-anchor="end">Feb-24</text>
<text transform="translate(387.06,579.5) rotate(-45)" font-size="8.400" font-weight="bold" fill="#222" text-anchor="end">Mar-24</text>
<text transform="translate(415.39,579.5) rotate(-45)" font-size="8.400" font-weight="bold" fill="#222" text-anchor="end">Apr-24</text>
<text transform="translate(443.72,579.5) rotate(-45)" font-size="8.400" font-weight="bold" fill="#222" text-anchor="end">May-24</text>
<text transform="translate(472.05,579.5) rotate(-45)" font-size="8.400" font-weight="bold" fill="#222" text-anchor="end">Jun-24</text>
<text transform="translate(500.38,579.5) rotate(-45)" font-size="8.400" font-weight="bold" fill="#222" text-anchor="end">Jul-24</text>
<text transform="translate(528.71,579.5) rotate(-45)" font-size="8.400" font-weight="bold" fill="#222" text-anchor="end">Aug-24</text>
<text transform="translate(557.04,579.5) rotate(-45)" font-size="8.400" font-weight="bold" fill="#222" text-anchor="end">Sep-24</text>
<text transform="translate(585.37,579.5) rotate(-45)" font-size="8.400" font-weight="bold" fill="#222" text-anchor="end">Oct-24</text>
<text transform="translate(613.70,579.5) rotate(-45)" font-size="8.400" font-weight="bold" fill="#222" text-anchor="end">Nov-24</text>
<text transform="translate(639.53,579.5) rotate(-45)" font-size="8.400" font-weight="bold" fill="#222" text-anchor="end">1-Dec...</text>
</svg>
</body></html>
